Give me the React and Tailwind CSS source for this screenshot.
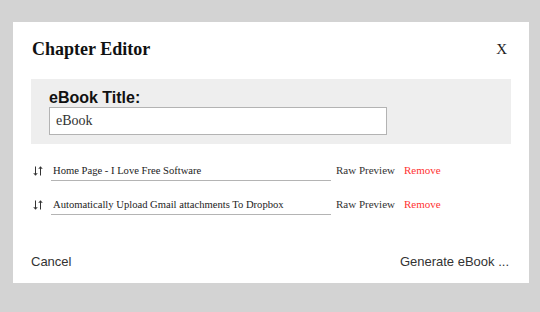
import React from 'react';

const serif = "font-['Liberation_Serif','Times_New_Roman',serif]";
const sans = "font-['Liberation_Sans',Arial,sans-serif]";

function SortIcon() {
  return (
    <svg width="10" height="10" viewBox="0 0 10 10" className="shrink-0 ml-[2px]" fill="none" stroke="#333" strokeWidth="1">
      {/* flecha abajo */}
      <path d="M2.5 0.5 V9" />
      <path d="M0.8 7 L2.5 9.3 L4.2 7" />
      {/* flecha arriba */}
      <path d="M7.5 1 V9.5" />
      <path d="M5.8 3 L7.5 0.7 L9.2 3" />
    </svg>
  );
}

function ChapterRow({ title }) {
  return (
    <div className="flex items-start">
      <div className="h-[21px] flex items-center">
        <SortIcon />
      </div>
      <input
        readOnly
        value={title}
        className={`ml-[8px] w-[280px] h-[21px] pl-[2px] border-0 border-b border-[#b4b4b4] outline-none bg-transparent text-[10.6px] text-[#222] ${serif}`}
      />
      <span className={`ml-[5px] h-[21px] leading-[20px] text-[11px] text-[#333] ${serif}`}>Raw Preview</span>
      <span className={`ml-[9px] h-[21px] leading-[20px] text-[11px] text-[#ff3333] ${serif}`}>Remove</span>
    </div>
  );
}

export default function App() {
  const chapters = [
    'Home Page - I Love Free Software',
    'Automatically Upload Gmail attachments To Dropbox',
  ];

  return (
    <div className="w-[540px] h-[312px] bg-[#d3d3d3] pt-[22px] pl-[13px] overflow-hidden">
      <div className="w-[516px] h-[261px] bg-white px-[18px] pt-[17px] flex flex-col">
        {/* Cabecera */}
        <div className="flex items-start justify-between">
          <h1 className={`pl-[1px] text-[18px] leading-[20px] font-bold text-[#111] ${serif}`}>Chapter Editor</h1>
          <span className={`mr-[4px] text-[15px] leading-[20px] text-[#222] ${serif}`}>X</span>
        </div>

        {/* Panel título */}
        <div className="mt-[20px] bg-[#eeeeee] px-[18px] pt-[10px] pb-[9px]">
          <div className={`text-[16px] leading-[18px] font-bold text-[#111] ${sans}`}>eBook Title:</div>
          <input
            readOnly
            value="eBook"
            className={`block w-[338px] h-[28px] border border-[#b3b3b3] bg-white pl-[6px] text-[14px] text-[#333] outline-none ${serif}`}
          />
        </div>

        {/* Capítulos */}
        <div className="mt-[16px] flex flex-col gap-[13px]">
          {chapters.map((c) => (
            <ChapterRow key={c} title={c} />
          ))}
        </div>

        {/* Pie */}
        <div className={`mt-[39px] flex justify-between text-[13px] leading-[16px] text-[#333] ${sans}`}>
          <span>Cancel</span>
          <span className="mr-[2px]">Generate eBook ...</span>
        </div>
      </div>
    </div>
  );
}
